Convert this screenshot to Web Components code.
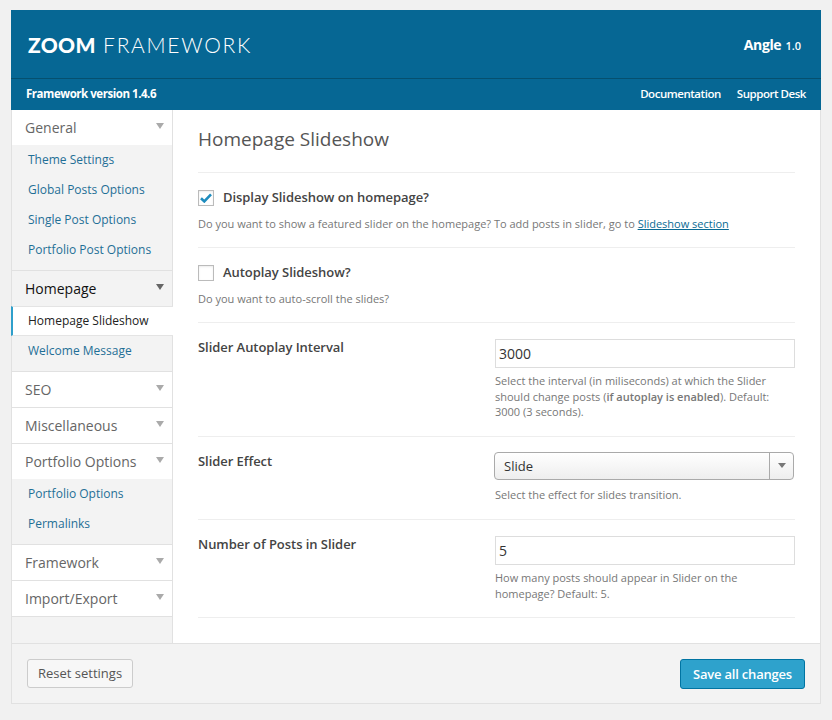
<!DOCTYPE html>
<html>
<head>
<meta charset="utf-8">
<title>ZOOM Framework</title>
<style>
  html, body { margin: 0; padding: 0; background: #f1f1f1; }
  body { font-family: "Open Sans", sans-serif; color: #555; }
  a { color: #0a6b94; }
</style>
</head>
<body>
<zoom-panel>
  <zoom-header slot="header" version="Framework version 1.4.6" theme="Angle" theme-version="1.0"></zoom-header>
  <zoom-nav slot="nav">
    <nav-group label="General" open>
      <nav-item>Theme Settings</nav-item>
      <nav-item>Global Posts Options</nav-item>
      <nav-item>Single Post Options</nav-item>
      <nav-item>Portfolio Post Options</nav-item>
    </nav-group>
    <nav-group label="Homepage" open current>
      <nav-item active>Homepage Slideshow</nav-item>
      <nav-item>Welcome Message</nav-item>
    </nav-group>
    <nav-group label="SEO"></nav-group>
    <nav-group label="Miscellaneous"></nav-group>
    <nav-group label="Portfolio Options" open>
      <nav-item>Portfolio Options</nav-item>
      <nav-item>Permalinks</nav-item>
    </nav-group>
    <nav-group label="Framework"></nav-group>
    <nav-group label="Import/Export"></nav-group>
  </zoom-nav>
  <zoom-section slot="main" heading="Homepage Slideshow">
    <check-option label="Display Slideshow on homepage?" checked>Do you want to show a featured slider on the homepage? To add posts in slider, go to <a href="#" style="color:#0a6b94">Slideshow section</a></check-option>
    <check-option label="Autoplay Slideshow?">Do you want to auto-scroll the slides?</check-option>
    <field-option label="Slider Autoplay Interval" value="3000">Select the interval (in miliseconds) at which the Slider<br>should change posts (<b style="font-weight:600">if autoplay is enabled</b>). Default:<br>3000 (3 seconds).</field-option>
    <field-option label="Slider Effect" value="Slide" type="select">Select the effect for slides transition.</field-option>
    <field-option label="Number of Posts in Slider" value="5">How many posts should appear in Slider on the homepage? Default: 5.</field-option>
  </zoom-section>
  <zoom-footer slot="footer"></zoom-footer>
</zoom-panel>

<script>
;(function() {
  function define(name, css, html, setup) {
    customElements.define(name, class extends HTMLElement {
      connectedCallback() {
        if (this.shadowRoot) return
        const shadow = this.attachShadow({ mode: 'open' })
        const attr = key => this.getAttribute(key) || ''
        shadow.innerHTML = '<style>' + css + '</style>' + html(attr, this)
        if (setup) setup(shadow, this)
      }
    })
  }

  define('zoom-panel', `
    :host { display: block; width: 810px; margin: 10px 0 0 11px; }
    .body { display: flex; background: #f3f3f3; border-left: 1px solid #e1e1e1; border-right: 1px solid #e1e1e1; box-sizing: border-box; }
    .nav { width: 160px; flex: none; }
    .main { flex: 1; background: #fff; border-left: 1px solid #e1e1e1; }
  `, () => `
    <slot name="header"></slot>
    <div class="body">
      <div class="nav"><slot name="nav"></slot></div>
      <div class="main"><slot name="main"></slot></div>
    </div>
    <slot name="footer"></slot>
  `)

  define('zoom-header', `
    :host { display: block; background: #066794; color: #fff; }
    .top { height: 68px; display: flex; align-items: center; justify-content: space-between; padding: 0 20px 0 17px; border-bottom: 1px solid #05506f; }
    .logo { font-family: Lato, sans-serif; font-size: 21px; font-weight: 300; letter-spacing: 1.7px; }
    .logo b { font-weight: 900; letter-spacing: .3px; margin-right: 0; }
    .theme { font-size: 14px; font-weight: 700; letter-spacing: -.4px; }
    .theme small { font-size: 11px; font-weight: 600; letter-spacing: 0; margin-left: 1px; }
    .sub { height: 31px; display: flex; align-items: center; justify-content: space-between; padding: 0 15px; font-size: 11.5px; letter-spacing: -.46px; line-height: 16px; padding-bottom: 1px; box-sizing: border-box; }
    .sub b { font-weight: 700; }
    .links { display: flex; gap: 16px; font-weight: 600; }
  `, attr => `
    <div class="top">
      <div class="logo"><b>ZOOM</b> FRAMEWORK</div>
      <div class="theme">${attr('theme')} <small>${attr('theme-version')}</small></div>
    </div>
    <div class="sub">
      <b>${attr('version')}</b>
      <div class="links"><span>Documentation</span><span>Support Desk</span></div>
    </div>
  `)

  define('zoom-nav', `
    :host { display: block; padding-bottom: 26px; }
  `, () => `<slot></slot>`)

  define('nav-group', `
    :host { display: block; border-bottom: 1px solid #e1e1e1; }
    .head { height: 35px; box-sizing: border-box; padding: 8px 8px 0 13px; background: #fff; font-size: 14px; line-height: 20px; color: #666; display: flex; justify-content: space-between; }
    :host([current]) .head { background: #f3f3f3; color: #111; }
    .arrow { width: 0; height: 0; margin-top: 5px; border: 4px solid transparent; border-top: 6px solid #aaa; border-bottom: 0; }
    :host([current]) .arrow { border-top-color: #666; }
    .list { display: none; padding: 0 0 5px; background: #f3f3f3; }
    :host([open]) .list { display: block; }
  `, attr => `
    <div class="head"><span>${attr('label')}</span><i class="arrow"></i></div>
    <div class="list"><slot></slot></div>
  `)

  define('nav-item', `
    :host { display: block; height: 30px; box-sizing: border-box; padding-left: 16px; font-size: 12px; line-height: 29px; color: #1f6f96; white-space: nowrap; }
    :host([active]) { height: 30px; margin: 0 -1px; padding-left: 15px; line-height: 28px; color: #222; background: #fff; border-left: 2px solid #2e9fcb; border-top: 1px solid #e4e4e4; border-bottom: 1px solid #e4e4e4; position: relative; }
  `, () => `<slot></slot>`)

  define('zoom-section', `
    :host { display: block; padding: 0 25px 25px; box-sizing: border-box; }
    h2 { margin: 0; height: 63px; box-sizing: border-box; padding-top: 15px; font-size: 19px; line-height: 28px; font-weight: 400; color: #555; border-bottom: 1px solid #eee; }
  `, attr => `
    <h2>${attr('heading')}</h2>
    <slot></slot>
  `)

  const checkMark = '<svg width="12" height="10" viewBox="0 0 12 10"><path d="M1 5.2 L4.3 8.4 L11 1.4" fill="none" stroke="#1e8cbe" stroke-width="2.6"/></svg>'

  define('check-option', `
    :host { display: block; height: 75px; box-sizing: border-box; padding-top: 15px; border-bottom: 1px solid #eee; font-size: 11px; color: #777; }
    .row { display: flex; align-items: center; gap: 9px; height: 18px; }
    .box { width: 14px; height: 14px; margin-top: 2px; border: 1px solid #bbb; background: #fff; display: flex; align-items: center; justify-content: center; box-shadow: inset 0 1px 2px rgba(0,0,0,.08); }
    .label { font-size: 13px; font-weight: 600; color: #444; letter-spacing: -.05px; }
    .help { margin-top: 10px; line-height: 16px; }
  `, (attr, el) => `
    <div class="row">
      <span class="box">${el.hasAttribute('checked') ? checkMark : ''}</span>
      <span class="label">${attr('label')}</span>
    </div>
    <div class="help"><slot></slot></div>
  `)

  define('field-option', `
    :host { display: grid; grid-template-columns: 297px 1fr; padding: 16px 0 16px; border-bottom: 1px solid #eee; font-size: 11px; color: #777; }
    :host([type="select"]) { padding-bottom: 17px; }
    .label { font-size: 13px; font-weight: 600; color: #444; line-height: 18px; margin-top: -1px; letter-spacing: -.05px; }
    .input { height: 29px; box-sizing: border-box; border: 1px solid #ddd; padding-left: 3px; font-size: 14px; line-height: 27px; color: #333; }
    .select { height: 28px; box-sizing: border-box; margin: -1px 0 0 -1px; width: 300px; border: 1px solid #aaa; border-radius: 4px; display: flex; font-size: 13px; line-height: 26px; color: #333; background: linear-gradient(#fff, #eee); }
    .select span { flex: 1; padding-left: 9px; }
    .select i { width: 23px; border-left: 1px solid #aaa; display: flex; align-items: center; justify-content: center; }
    .select i::after { content: ''; border: 4px solid transparent; border-top: 5px solid #777; border-bottom: 0; }
    .help { margin-top: 5px; line-height: 15.5px; }
    .select + .help { margin-top: 7px; }
  `, (attr, el) => `
    <div class="label">${attr('label')}</div>
    <div>
      ${attr('type') === 'select'
        ? `<div class="select"><span>${attr('value')}</span><i></i></div>`
        : `<div class="input">${attr('value')}</div>`}
      <div class="help"><slot></slot></div>
    </div>
  `)

  define('zoom-footer', `
    :host { display: flex; height: 61px; box-sizing: border-box; padding: 15px 15px 0 15px; justify-content: space-between; align-items: flex-start; background: #f3f3f3; border: 1px solid #e1e1e1; }
    .btn { height: 29px; box-sizing: border-box; padding: 0 10px; border: 1px solid #ccc; border-radius: 3px; background: #f7f7f7; font-size: 13px; line-height: 27px; color: #555; }
    .primary { height: 30px; padding: 0 12px; background: #2ea2cc; border-color: #0074a2; color: #fff; font-weight: 600; line-height: 29px; letter-spacing: -.2px; }
  `, () => `
    <div class="btn">Reset settings</div>
    <div class="btn primary">Save all changes</div>
  `)
})()
</script>
</body>
</html>
